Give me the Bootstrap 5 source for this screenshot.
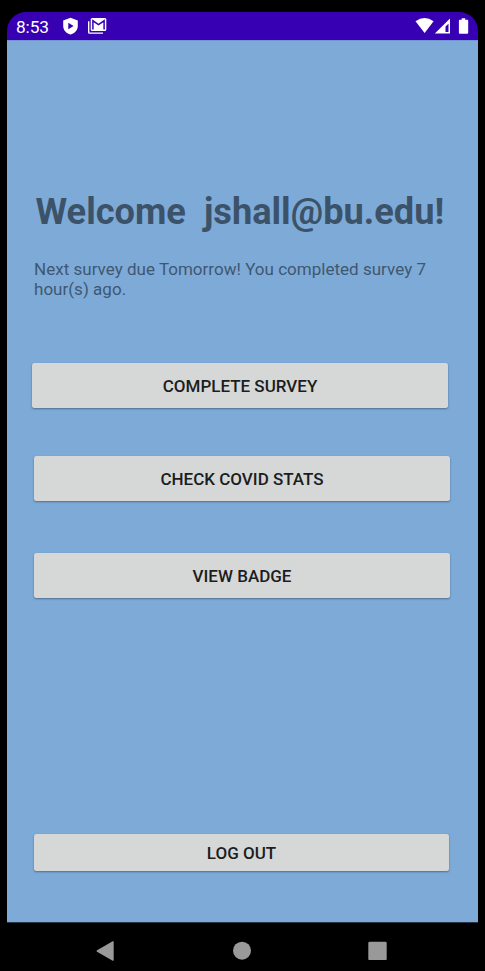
<!DOCTYPE html>
<html lang="en">
<head>
<meta charset="utf-8">
<meta name="viewport" content="width=device-width, initial-scale=1">
<title>Welcome</title>
<link href="https://cdn.jsdelivr.net/npm/bootstrap@5.3.0/dist/css/bootstrap.min.css" rel="stylesheet">
<style>
body{background:#000;font-family:Roboto,sans-serif;height:971px;overflow:hidden}
.phone{height:971px;padding:12px 7px 0}
.statusbar{height:28px;background:#3700b3;border-radius:19px 19px 0 0;color:#fff;padding:0 9px}
.clock{font-size:17.3px;line-height:28px;width:46px;white-space:nowrap;padding-top:1px;letter-spacing:-.1px}
.screen{height:883px;background:#7eaad8;border-top:1px solid #7593d5;border-bottom:1px solid #263648;padding:150px 28px 0 25px}
.title{font-size:36.2px;font-weight:700;line-height:42px;color:#3b5268;white-space:pre;margin:0 0 26px 3.500px}
.note{font-size:17px;line-height:20px;color:#3f5871;letter-spacing:.02px;margin:0 0 64px 2px;white-space:nowrap}
.action{height:45px;width:416px;padding:0;border-radius:2.5px;background:#d6d8d7;color:#1c1d1d;font-size:17px;font-weight:500;line-height:45px;box-shadow:0 1px 2px rgba(30,50,75,.5)}
.shifted{margin-left:2px}
.check{margin-top:48px}
.view{margin-top:52px}
.logout{height:37px;width:415px;line-height:37px;margin-top:236px}
.navkeys{height:48px;padding-top:7px}
svg{display:block;flex:none}
</style>
<script src="https://cdn.jsdelivr.net/npm/bootstrap@5.3.0/dist/js/bootstrap.bundle.min.js"></script>
</head>
<body>
<div class="phone">
  <header class="statusbar d-flex align-items-center">
    <span class="clock">8:53</span>
    <svg width="60" height="28" viewBox="62 12 60 28" fill="#fff">
      <path fill-rule="evenodd" d="M70.500 17.800l7.300 2.800v5.300c0 4-2.900 7.300-7.300 8.700-4.400-1.400-7.300-4.700-7.300-8.700v-5.300zM68.300 22.700v6.600l5.300-3.300z"/>
      <path d="M88 21.300h1.400v11.100h13.600v1.400h-13.500q-1.500 0-1.500-1.500z"/>
      <path d="M92.200 18h12.600q1.500 0 1.500 1.500v10q0 1.500-1.500 1.500h-12.600q-1.500 0-1.500-1.500v-10q0-1.500 1.500-1.500z"/>
      <path d="M92.900 29.500v-8.700l5.600 3.900 5.600-3.900v8.700" fill="none" stroke="#3700b3" stroke-width="1.500"/>
    </svg>
    <svg class="ms-auto" width="56" height="28" viewBox="413 12 56 28" fill="#fff">
      <path d="M415.500 21.300q9-6.400 18.100 0l-9 11.700z"/>
      <path fill-rule="evenodd" d="M450 18.500v15h-15.200zM448.500 23.700l-3 2.800v5.500h3z"/>
      <path d="M461.700 18.300h3.500v1.400h2q1 0 1 1v12q0 1-1 1h-7.300q-1 0-1-1v-12q0-1 1-1h1.800z"/>
    </svg>
  </header>
  <main class="screen d-flex flex-column align-items-start">
    <h1 class="title">Welcome  jshall@bu.edu!</h1>
    <p class="note">Next survey due Tomorrow! You completed survey 7<br>hour(s) ago.</p>
    <button class="btn action" type="button">COMPLETE SURVEY</button>
    <button class="btn action shifted check" type="button">CHECK COVID STATS</button>
    <button class="btn action shifted view" type="button">VIEW BADGE</button>
    <button class="btn action shifted logout" type="button">LOG OUT</button>
  </main>
  <nav class="navkeys">
    <svg width="471" height="41" viewBox="7 930 471 41" fill="#999">
      <path d="M112.700 941.300q1-.5 1 .6v18.200q0 1.100-1 .6l-15.700-9q-1-.7 0-1.400z"/>
      <circle cx="242" cy="950.700" r="9"/>
      <rect x="368.300" y="941.700" width="18.400" height="18.400" rx="1.200"/>
    </svg>
  </nav>
</div>
</body>
</html>
